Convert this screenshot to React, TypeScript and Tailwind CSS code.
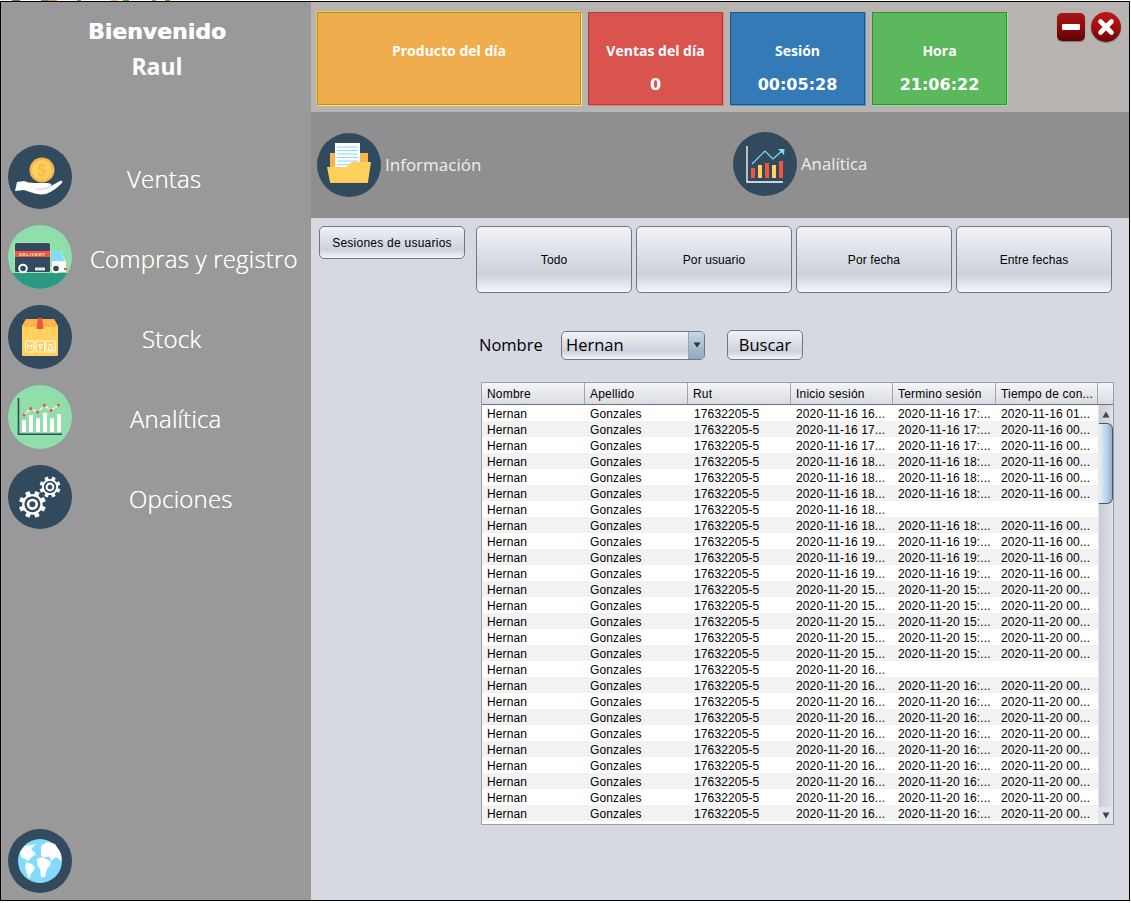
import React from "react";

const NAVY = "#324a5e";
const A = "font-['Liberation_Sans',Arial,sans-serif]";

function Circle({ fill = NAVY, children }: { fill?: string; children?: React.ReactNode }) {
  return (
    <svg width="64" height="64" viewBox="0 0 64 64" className="block shrink-0">
      <circle cx="32" cy="32" r="32" fill={fill} />
      {children}
    </svg>
  );
}

function HandIcon() {
  return (
    <Circle>
      <circle cx="34" cy="25" r="12.5" fill="#f9b54c" />
      <circle cx="34" cy="25" r="10" fill="#ffd05b" />
      <text x="34" y="31" textAnchor="middle" fontSize="16" fill="#f9b54c" fontFamily="Liberation Sans">$</text>
      <path d="M9 37 L16 36 Q20 38 26 38 L40 38 Q45 39 43 41 L52 36 Q56 35 53.5 38.5 Q46 46 38 49 Q30 50.5 22 47 L16 45 L7 46 Z" fill="#fff" />
      <path d="M28 44 Q38 45 43 41" stroke="#dfe3e8" strokeWidth="2" fill="none" />
    </Circle>
  );
}

function TruckIcon() {
  return (
    <svg width="64" height="64" viewBox="0 0 64 64" className="block shrink-0">
      <defs>
        <clipPath id="tc"><circle cx="32" cy="32" r="32" /></clipPath>
      </defs>
      <g clipPath="url(#tc)">
        <rect width="64" height="64" fill="#90dfaa" />
        <rect y="48" width="64" height="16" fill="#2c9984" />
      </g>
      <rect x="6.5" y="17.5" width="36" height="30" rx="2" fill="#b6ecc6" />
      <rect x="7" y="18" width="35" height="29" rx="1.5" fill={NAVY} />
      <rect x="7" y="26" width="35" height="6" fill="#f1543f" />
      <text x="24.5" y="30.8" textAnchor="middle" fontSize="4.4" letterSpacing="0.6" fontWeight="700" fill="#ffe9d9" fontFamily="Liberation Sans">DELIVERY</text>
      <path d="M44 26 H53 L58 37 V47 H44 Z" fill="#fff" />
      <path d="M44 26 H53 L57 36 H44 Z" fill="#84dbff" />
      <rect x="27" y="42.5" width="10" height="3" fill="#e6e9ee" />
      <circle cx="15" cy="43.5" r="3.8" fill={NAVY} stroke="#fff" strokeWidth="2" />
      <circle cx="48" cy="43.5" r="3.8" fill={NAVY} stroke="#fff" strokeWidth="2" />
      <rect x="56" y="43" width="3" height="2" fill="#f1543f" />
    </svg>
  );
}

function BoxIcon() {
  return (
    <Circle>
      <path d="M18 14 H46 L50 21 V50 Q50 51 49 51 H15 Q14 51 14 50 V21 Z" fill="#ffd05b" />
      <path d="M18 14 H46 L50 22 H14 Z" fill="#f9b54c" />
      <path d="M30 13 H34 L35.5 24 H28.5 Z" fill="#f1543f" />
      <g fill="none" stroke="#fff" strokeWidth="1">
        <rect x="17.5" y="36" width="8.5" height="11" rx="1" />
        <rect x="28" y="36" width="8.5" height="11" rx="1" />
        <rect x="38" y="36" width="9" height="11" rx="1" />
        <path d="M20 39.5 V44 M23.5 39.5 V44 M19 40.5 H25 M30.5 39.5 h4 l-1.5 3 h-1 z M32.2 42.5 V45 M40.5 39.5 h4 M42.5 41 a2 2 0 1 0 .1 0 M40 45 h5" />
      </g>
    </Circle>
  );
}

function ChartGreenIcon() {
  const tops = [35, 30, 33.3, 27.7, 33.3, 29];
  const xs = [14, 21, 28, 35, 42, 49];
  const pts: [number, number][] = [[16, 30], [22.7, 23.7], [29.7, 27], [36.3, 20.3], [43, 25.3], [50.3, 20]];
  return (
    <Circle fill="#90dfaa">
      <path d="M10.5 13 V49.2 H54" fill="none" stroke={NAVY} strokeWidth="1.6" />
      <g fill="#fff">
        {xs.map((x, i) => (
          <rect key={x} x={x} y={tops[i]} width="4" height={47 - tops[i]} />
        ))}
      </g>
      <polyline points={pts.map((p) => p.join(",")).join(" ")} fill="none" stroke="#fff" strokeWidth="1.4" strokeDasharray="3 1" />
      <g fill="#f1543f">
        {pts.map((p) => (
          <circle key={p[0]} cx={p[0]} cy={p[1]} r="1.6" />
        ))}
      </g>
    </Circle>
  );
}

function Gear({ x, y, r }: { x: number; y: number; r: number }) {
  const teeth = Array.from({ length: 8 }, (_, i) => i * 45);
  return (
    <g transform={`translate(${x} ${y})`}>
      {teeth.map((a) => (
        <rect key={a} x={-r * 0.17} y={-r} width={r * 0.34} height={r * 0.4} fill="#fff" transform={`rotate(${a + 22.5})`} />
      ))}
      <circle r={r * 0.68} fill="none" stroke="#fff" strokeWidth={r * 0.17} />
      <circle r={r * 0.32} fill="none" stroke="#fff" strokeWidth={r * 0.2} />
    </g>
  );
}

function GearsIcon() {
  return (
    <Circle>
      <Gear x={24.4} y={39.3} r={13.5} />
      <Gear x={42} y={22} r={10.5} />
    </Circle>
  );
}

function GlobeIcon() {
  return (
    <Circle>
      <circle cx="32" cy="32" r="22" fill="#84dbff" />
      <g fill="#fff">
        <path d="M12 23 L17 17 L28 15 L23 20 L28 25 L24 28 L20 32 L17 30 L13 28 Z" />
        <path d="M18 33 L24 35 L27 39 L23 45 L21 50 L19 45 L17 38 Z" />
        <path d="M33 17 L39 13 L47 15 L53 25 L53.5 32 L48 28 L43 32 L42 28 L36 28 L33 27 Z" />
        <path d="M29 30 L35 28 L42 32 L43 35 L39 40 L37 48 L33 48 L32 40 L29 35 Z" />
      </g>
    </Circle>
  );
}

function FolderIcon() {
  return (
    <Circle>
      <path d="M13 20 H51 V50 H13 Z" fill="#f9b54c" />
      <rect x="18" y="10" width="25" height="26" fill="#fff" />
      <g stroke="#84dbff" strokeWidth="1">
        <path d="M20 14 H41 M20 17.5 H41 M20 21 H41 M20 24.5 H41 M20 28 H41 M20 31.5 H41" />
      </g>
      <path d="M10 34 H29 L35 29 H54 L51 49 Q51 49.5 50 49.5 H14 Q13 49.5 13 49 Z" fill="#ffd05b" />
    </Circle>
  );
}

function TrendIcon() {
  return (
    <Circle>
      <path d="M14 14 V50 H50" fill="none" stroke="#fff" strokeWidth="1.3" />
      <rect x="18" y="36" width="4" height="10" fill="#f1543f" />
      <rect x="25" y="33" width="4" height="13" fill="#ffd05b" />
      <rect x="32" y="31" width="4" height="15" fill="#f1543f" />
      <rect x="39" y="33" width="4" height="13" fill="#ffd05b" />
      <rect x="46" y="29" width="4" height="17" fill="#f1543f" />
      <path d="M19 32 L32 19 L40 27 L50 18" fill="none" stroke="#84dbff" strokeWidth="1.2" />
      <path d="M45 17 L51.5 17 L51 23 Z" fill="#84dbff" />
    </Circle>
  );
}

const nav = [
  { icon: <HandIcon />, label: "Ventas", cls: "ml-[55px]" },
  { icon: <TruckIcon />, label: "Compras y registro", cls: "ml-[18px]" },
  { icon: <BoxIcon />, label: "Stock", cls: "ml-[70px]" },
  { icon: <ChartGreenIcon />, label: "Analítica", cls: "ml-[58px]" },
  { icon: <GearsIcon />, label: "Opciones", cls: "ml-[57px]" },
];

const cards = [
  { w: "w-[264px]", cls: "bg-[#f0ad4e] border-[#b98a3c] shadow-[1px_1px_0_#ffe96b,-1px_-1px_0_#e8d24a]", title: "Producto del día", value: "\u00a0" },
  { w: "w-[135px]", cls: "bg-[#d9534f] border-[#a83f3c] shadow-[1px_1px_0_#f47a76]", title: "Ventas del día", value: "0" },
  { w: "w-[135px]", cls: "bg-[#337ab7] border-[#23557f] shadow-[1px_1px_0_#4a9ae0]", title: "Sesión", value: "00:05:28" },
  { w: "w-[135px]", cls: "bg-[#5cb85c] border-[#3f8a3f] shadow-[1px_1px_0_#86ef86]", title: "Hora", value: "21:06:22" },
];

const columns = ["Nombre", "Apellido", "Rut", "Inicio sesión", "Termino sesión", "Tiempo de con..."];

type R = [string, string, string];
const rowsData: R[] = [
  ["16 16", "16 17", "16 01"],
  ["16 17", "16 17", "16 00"],
  ["16 17", "16 17", "16 00"],
  ["16 18", "16 18", "16 00"],
  ["16 18", "16 18", "16 00"],
  ["16 18", "16 18", "16 00"],
  ["16 18", "", ""],
  ["16 18", "16 18", "16 00"],
  ["16 19", "16 19", "16 00"],
  ["16 19", "16 19", "16 00"],
  ["16 19", "16 19", "16 00"],
  ["20 15", "20 15", "20 00"],
  ["20 15", "20 15", "20 00"],
  ["20 15", "20 15", "20 00"],
  ["20 15", "20 15", "20 00"],
  ["20 15", "20 15", "20 00"],
  ["20 16", "", ""],
  ...Array.from({ length: 9 }, (): R => ["20 16", "20 16", "20 00"]),
];

const date = (s: string, colon: boolean) => (s ? `2020-11-${s}${colon ? ":..." : "..."}` : "");

const btn =
  "bg-[linear-gradient(180deg,#f2f3f6_0%,#dfe2e9_35%,#cdd1da_72%,#f3f5fb_100%)] border border-[#74777c] rounded-[5px] text-black";

const cellW = ["w-[103px]", "w-[103px]", "w-[103px]", "w-[102px]", "w-[103px]", "w-[102px]"];

const bits = [
  { w: "w-[8px]", ml: "ml-[12px]", c: "bg-[#3d7fc4]" },
  { w: "w-[7px]", ml: "ml-[21px]", c: "bg-[#5a8fc0]" },
  { w: "w-[9px]", ml: "ml-0", c: "bg-[#e0a050]" },
  { w: "w-[4px]", ml: "ml-[20px]", c: "bg-[#4fc020]" },
  { w: "w-[7px]", ml: "ml-[30px]", c: "bg-[#d8c8a0]" },
  { w: "w-[6px]", ml: "ml-[5px]", c: "bg-[#4fc020]" },
  { w: "w-[4px]", ml: "ml-[23px]", c: "bg-[#8aa0b8]" },
  { w: "w-[5px]", ml: "ml-[9px]", c: "bg-[#4fc020]" },
];

export default function App() {
  return (
    <div className="w-[1131px] h-[903px] bg-white overflow-hidden">
      <div className="h-px flex">
        {bits.map((b, i) => (
          <span key={i} className={`${b.w} ${b.ml} ${b.c} h-px`} />
        ))}
      </div>
      <div className="w-[1130px] h-[900px] border border-black flex box-border">
        <aside className="w-[310px] h-full bg-[#999999] flex flex-col shrink-0 text-white">
          <div className="h-[143px] pl-[2px] flex flex-col items-center font-bold pt-[13px]">
            <div className="text-center font-['DejaVu_Sans',sans-serif] text-[22px] leading-[34px] [text-shadow:0.3px_0_0_#fff]">Bienvenido</div>
            <div className="text-center font-['Open_Sans',sans-serif] text-[23px] leading-[34px]">Raul</div>
          </div>
          <nav className="flex flex-col gap-4 pl-[7px]">
            {nav.map((n) => (
              <div key={n.label} className="flex items-center h-16">
                {n.icon}
                <span className={`${n.cls} font-['Open_Sans',sans-serif] font-light text-[24px] leading-none tracking-[0.2px] whitespace-nowrap pt-[3px] [text-shadow:0_0_0.6px_#ffffff]`}>
                  {n.label}
                </span>
              </div>
            ))}
          </nav>
          <div className="mt-auto pl-[7px] pb-[7px]">
            <GlobeIcon />
          </div>
        </aside>

        <main className="flex-1 h-full flex flex-col min-w-0">
          <header className="h-[110px] bg-[#b8b4b2] flex pl-[6px] pt-[10px] shrink-0">
            <div className="flex gap-[7px]">
              {cards.map((c) => (
                <div
                  key={c.title}
                  className={`${c.w} ${c.cls} h-[93px] border flex flex-col items-center text-white font-bold box-border`}
                >
                  <div className="font-['Open_Sans',sans-serif] text-[14px] leading-4 mt-[30px]">{c.title}</div>
                  <div className="font-['DejaVu_Sans',sans-serif] text-[16px] leading-5 mt-[16px]">{c.value}</div>
                </div>
              ))}
            </div>
            <div className="flex items-center gap-[6px] ml-[50px] h-[30px]">
              <div className="w-[28px] h-[28px] rounded-[5px] bg-[linear-gradient(180deg,#a81414_0%,#8f0c0c_50%,#5c0303_100%)] flex items-center justify-center shadow-[0_1px_1px_#777]">
                <div className="w-[18px] h-[6px] bg-white rounded-[1px]" />
              </div>
              <div className="w-[30px] h-[30px] rounded-full bg-[linear-gradient(180deg,#c01818_0%,#a00e0e_55%,#6a0404_100%)] flex items-center justify-center shadow-[0_1px_1px_#777]">
                <svg width="18" height="18" viewBox="0 0 18 18">
                  <path d="M3.5 3.5 L14.5 14.5 M14.5 3.5 L3.5 14.5" stroke="#fff" strokeWidth="4.6" strokeLinecap="round" />
                </svg>
              </div>
            </div>
          </header>

          <div className="h-[106px] bg-[#8f8f8f] flex shrink-0 pl-[6px] text-[#eeeeee] font-['Open_Sans',sans-serif] text-[17px]">
            <div className="w-[416px] flex items-center gap-[4px]">
              <FolderIcon />
              <span>Información</span>
            </div>
            <div className="flex items-center gap-[4px] pb-[2px]">
              <TrendIcon />
              <span className="text-[16.8px]">Analítica</span>
            </div>
          </div>

          <div className={`flex-1 bg-[#d6d9e2] min-h-0 flex pl-[8px] pt-[8px] ${A}`}>
            <div className="w-[157px] shrink-0">
              <button className={`${btn} w-[146px] h-[33px] text-[12px] tracking-[0.25px]`}>Sesiones de usuarios</button>
            </div>
            <div className="flex-1 min-w-0">
              <div className="flex gap-1">
                {["Todo", "Por usuario", "Por fecha", "Entre fechas"].map((t) => (
                  <button key={t} className={`${btn} w-[156px] h-[67px] text-[12px] tracking-[0.1px]`}>
                    {t}
                  </button>
                ))}
              </div>

              <div className="flex items-center mt-[37px] ml-[3px] h-[30px] font-['Open_Sans',sans-serif] text-[16.5px]">
                <span className="w-[82px] text-black pt-px">Nombre</span>
                <div className={`${btn} w-[144px] h-[29px] flex items-center overflow-hidden`}>
                  <span className="flex-1 pl-[4px] pt-px">Hernan</span>
                  <div className="w-[16px] h-full bg-[linear-gradient(180deg,#c6d6e6,#8da9c4)] border-l border-[#9aa3ad] flex items-center justify-center">
                    <svg width="8" height="6" viewBox="0 0 8 6"><path d="M0.5 0.5 H7.5 L4 5.5 Z" fill="#333" /></svg>
                  </div>
                </div>
                <button className={`${btn} w-[76px] h-[30px] ml-[22px] pt-px`}>Buscar</button>
              </div>

              <div className="mt-[22px] ml-[5px] w-[633px] h-[443px] border border-[#9a9ea5] bg-white flex flex-col box-border text-[12px] text-black">
                <div className="h-[21px] flex shrink-0 border-b border-[#6f7378] bg-[linear-gradient(180deg,#f4f5f7,#d9dce3)] box-content">
                  {columns.map((c, i) => (
                    <div key={c} className={`${cellW[i]} shrink-0 border-r border-[#a3a7ad] pl-[5px] leading-[23px] whitespace-nowrap overflow-hidden tracking-[0.2px]`}>
                      {c}
                    </div>
                  ))}
                  <div className="flex-1" />
                </div>
                <div className="flex-1 flex min-h-0">
                  <div className="w-[616px] shrink-0 tracking-[0.13px]">
                    {rowsData.map((r, i) => (
                      <div key={i} className={`h-4 flex leading-[18px] ${i % 2 ? "bg-[#f2f2f2]" : "bg-white"}`}>
                        <div className={`${cellW[0]} shrink-0 pl-[5px]`}>Hernan</div>
                        <div className={`${cellW[1]} shrink-0 pl-[5px]`}>Gonzales</div>
                        <div className={`${cellW[2]} shrink-0 pl-[6px]`}>17632205-5</div>
                        <div className={`${cellW[3]} shrink-0 pl-[5px]`}>{date(r[0], false)}</div>
                        <div className={`${cellW[4]} shrink-0 pl-[5px]`}>{date(r[1], true)}</div>
                        <div className={`${cellW[5]} shrink-0 pl-[5px]`}>{date(r[2], false)}</div>
                      </div>
                    ))}
                  </div>
                  <div className="flex-1 flex flex-col bg-[linear-gradient(90deg,#c9ccd3,#dfe1e6)] border-l border-[#e3e5ea]">
                    <div className="h-[18px] flex items-center justify-center shrink-0">
                      <svg width="8" height="7" viewBox="0 0 8 7"><path d="M4 0.5 L7.5 6.5 H0.5 Z" fill="#444" /></svg>
                    </div>
                    <div className="h-[81px] rounded-r-[6px] border border-l-0 border-[#4a5866] bg-[linear-gradient(90deg,#e8f1f8,#b8d2e6_60%,#8fb2cf)] shrink-0" />
                    <div className="flex-1" />
                    <div className="h-[17px] flex items-center justify-center shrink-0 bg-[#e3e5ea]">
                      <svg width="8" height="7" viewBox="0 0 8 7"><path d="M0.5 0.5 H7.5 L4 6.5 Z" fill="#444" /></svg>
                    </div>
                  </div>
                </div>
              </div>
            </div>
          </div>
        </main>
      </div>
    </div>
  );
}
